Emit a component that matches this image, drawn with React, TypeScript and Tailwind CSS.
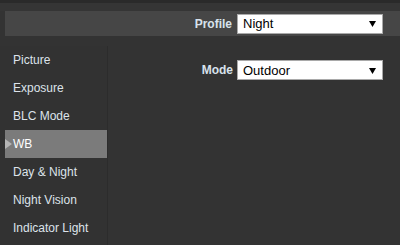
import React from "react";

const items = ["Picture", "Exposure", "BLC Mode", "WB", "Day & Night", "Night Vision", "Indicator Light"];

function Select({ value }: { value: string }) {
  return (
    <div className="w-[146px] h-[20px] bg-white border border-[#a9a9a9] flex items-center justify-between pl-[5px] pr-[6px]">
      <span className="text-[13px] text-black leading-none">{value}</span>
      <svg width="7" height="7" viewBox="0 0 7 7"><polygon points="0,1 7,1 3.5,7" fill="#000" /></svg>
    </div>
  );
}

export default function App() {
  return (
    <div className="w-[400px] h-[245px] bg-[#333333] overflow-hidden flex flex-col" style={{ fontFamily: '"Liberation Sans", Arial, sans-serif' }}>
      <div className="h-[3px] bg-[#2a2a2a]" />
      <div className="h-[8px] bg-[#353535]" />
      <div className="ml-[5px] h-[25px] bg-[#464646] flex items-center justify-end pr-[17px] gap-[5px]">
        <span className="text-[12px] font-bold text-[#d8e2ec]">Profile</span>
        <Select value="Night" />
      </div>
      <div className="flex flex-1 pt-[10px]">
        <div className="w-[108px] pl-[5px] flex flex-col border-r border-[#2c2c2c] bg-[#323232]">
          {items.map((it) => {
            const active = it === "WB";
            return (
              <div key={it} className={`relative h-[28px] flex items-center pl-[8px] text-[12px] ${active ? "bg-[#7b7b7b] text-white" : "text-[#dde3ea]"}`}>
                {active && (
                  <svg className="absolute left-0 top-[9px]" width="7" height="10" viewBox="0 0 7 10"><polygon points="0,0 7,5 0,10" fill="#b5b5b5" /></svg>
                )}
                {it}
              </div>
            );
          })}
        </div>
        <div className="flex-1 pt-[14px] flex justify-end pr-[17px]">
          <div className="flex items-center gap-[4px] h-[20px]">
            <span className="text-[12px] font-bold text-[#d8e2ec]">Mode</span>
            <Select value="Outdoor" />
          </div>
        </div>
      </div>
    </div>
  );
}
